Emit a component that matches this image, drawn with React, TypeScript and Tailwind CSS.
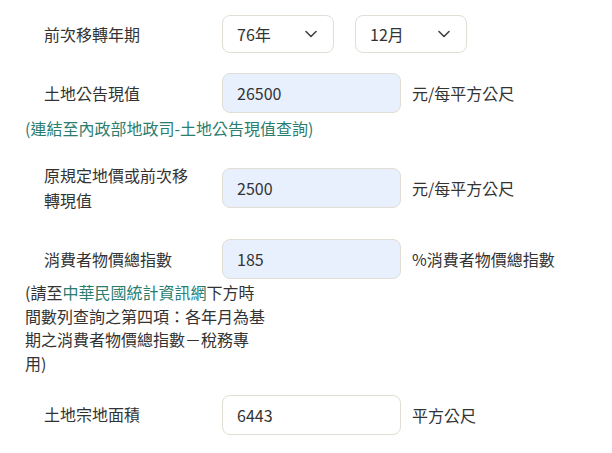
import React from 'react'

const font = { fontFamily: '"Noto Sans CJK TC", "Noto Sans", sans-serif' }

function Chevron() {
  return (
    <svg width="12" height="8" viewBox="0 0 12 8" fill="none" className="text-[#444]">
      <path d="M1 1.5l5 5 5-5" stroke="currentColor" strokeWidth="1.6" strokeLinecap="round" strokeLinejoin="round" />
    </svg>
  )
}

function SelectBox({ value }: { value: string }) {
  return (
    <div className="flex h-[38px] w-[112px] items-center justify-between rounded-[8px] border border-[#e2ddd5] bg-white pl-[14px] pr-[16px] text-[16px] text-[#333]">
      <span>{value}</span>
      <Chevron />
    </div>
  )
}

function Field({ value, unit, filled = true }: { value: string; unit: string; filled?: boolean }) {
  return (
    <div className="flex items-center">
      <div
        className={`flex h-[40px] w-[179px] items-center rounded-[8px] border border-[#e2ddd5] pl-[14px] text-[16px] text-[#333] ${
          filled ? 'bg-[#e8f0fe]' : 'bg-white'
        }`}
      >
        {value}
      </div>
      <span className="ml-[11px] text-[16px] text-[#333]">{unit}</span>
    </div>
  )
}

function Row({ label, children, className = '' }: { label: React.ReactNode; children: React.ReactNode; className?: string }) {
  return (
    <div className={`flex items-center ${className}`}>
      <div className="w-[197px] pl-[19px] pr-[8px] text-[16px] leading-[25px] text-[#333]">{label}</div>
      {children}
    </div>
  )
}

export default function App() {
  return (
    <div className="min-h-[453px] w-[612px] bg-white pl-[25px] pt-[15px]" style={font}>
      <Row label="前次移轉年期">
        <div className="flex gap-[21px]">
          <SelectBox value="76年" />
          <SelectBox value="12月" />
        </div>
      </Row>

      <Row label="土地公告現值" className="mt-[20px]">
        <Field value="26500" unit="元/每平方公尺" />
      </Row>
      <p className="mt-[3px] text-[16px] leading-[24px] text-[#2a7d6f]">(連結至內政部地政司-土地公告現值查詢)</p>

      <Row label={<>原規定地價或前次移<br />轉現值</>} className="mt-[23px]">
        <Field value="2500" unit="元/每平方公尺" />
      </Row>

      <Row label="消費者物價總指數" className="mt-[26px]">
        <Field value="185" unit="%消費者物價總指數" />
      </Row>
      <p className="mt-[2px] w-[242px] text-[16px] leading-[23.7px] text-[#333]">
        (請至<span className="text-[#2a7d6f]">中華民國統計資訊網</span>下方時間數列查詢之第四項：各年月為基期之消費者物價總指數－稅務專用)
      </p>

      <Row label="土地宗地面積" className="mt-[19px]">
        <Field value="6443" unit="平方公尺" filled={false} />
      </Row>
    </div>
  )
}
